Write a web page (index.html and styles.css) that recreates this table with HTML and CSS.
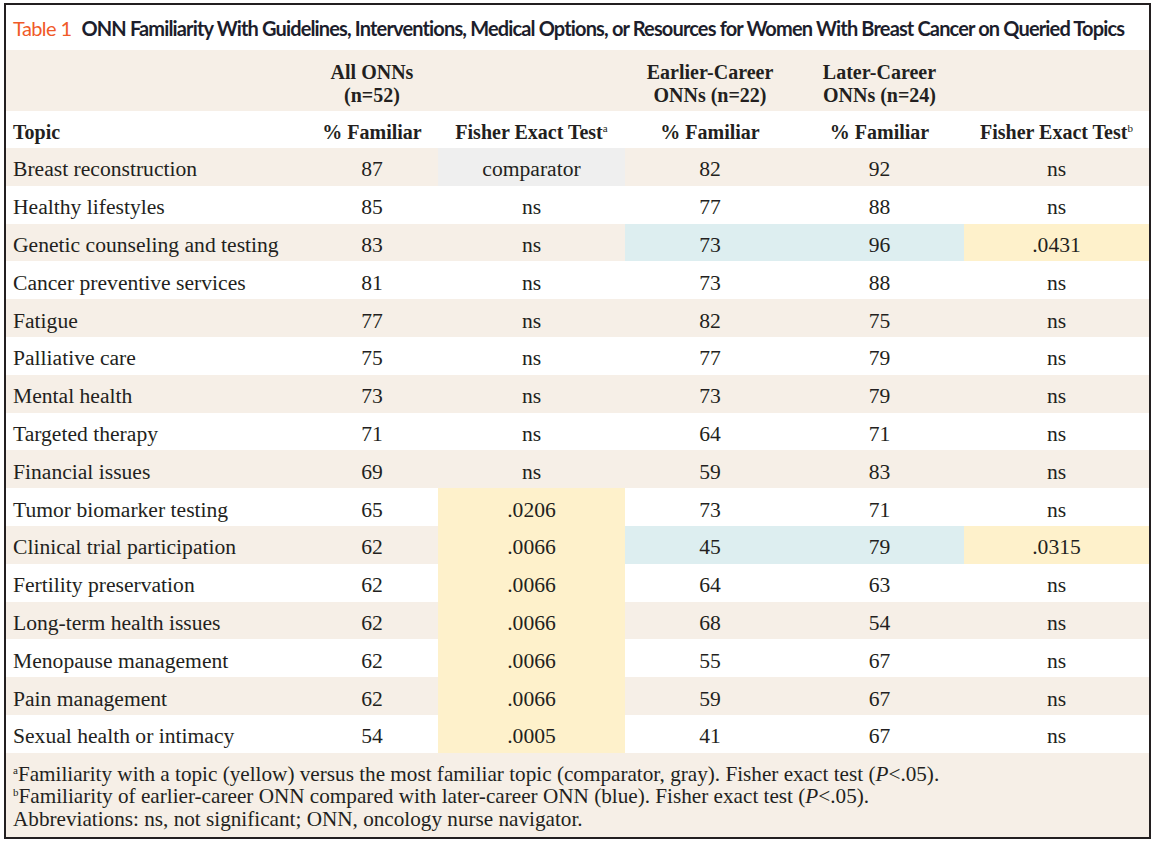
FILE: index.html
```html
<!DOCTYPE html>
<html>
<head>
<meta charset="utf-8">
<link rel="stylesheet" href="styles.css">
</head>
<body>
<div class="frame">
  <div class="title"><span class="label">Table 1</span><span class="caption">ONN Familiarity With Guidelines, Interventions, Medical Options, or Resources for Women With Breast Cancer on Queried Topics</span></div>
  <table class="data">
    <colgroup>
      <col class="c-topic"><col class="c-pct"><col class="c-fa"><col class="c-early"><col class="c-late"><col class="c-fb">
    </colgroup>
    <thead>
      <tr class="h1 beige">
        <th></th>
        <th>All ONNs<br>(n=52)</th>
        <th></th>
        <th>Earlier-Career<br>ONNs (n=22)</th>
        <th>Later-Career<br>ONNs (n=24)</th>
        <th></th>
      </tr>
      <tr class="h2">
        <th class="left">Topic</th>
        <th>% Familiar</th>
        <th>Fisher Exact Test<sup>a</sup></th>
        <th>% Familiar</th>
        <th>% Familiar</th>
        <th>Fisher Exact Test<sup>b</sup></th>
      </tr>
    </thead>
    <tbody>
      <tr class="beige"><td class="left">Breast reconstruction</td><td>87</td><td class="gray">comparator</td><td>82</td><td>92</td><td>ns</td></tr>
      <tr><td class="left">Healthy lifestyles</td><td>85</td><td>ns</td><td>77</td><td>88</td><td>ns</td></tr>
      <tr class="beige"><td class="left">Genetic counseling and testing</td><td>83</td><td>ns</td><td class="blue">73</td><td class="blue">96</td><td class="yellow">.0431</td></tr>
      <tr><td class="left">Cancer preventive services</td><td>81</td><td>ns</td><td>73</td><td>88</td><td>ns</td></tr>
      <tr class="beige"><td class="left">Fatigue</td><td>77</td><td>ns</td><td>82</td><td>75</td><td>ns</td></tr>
      <tr><td class="left">Palliative care</td><td>75</td><td>ns</td><td>77</td><td>79</td><td>ns</td></tr>
      <tr class="beige"><td class="left">Mental health</td><td>73</td><td>ns</td><td>73</td><td>79</td><td>ns</td></tr>
      <tr><td class="left">Targeted therapy</td><td>71</td><td>ns</td><td>64</td><td>71</td><td>ns</td></tr>
      <tr class="beige"><td class="left">Financial issues</td><td>69</td><td>ns</td><td>59</td><td>83</td><td>ns</td></tr>
      <tr><td class="left">Tumor biomarker testing</td><td>65</td><td class="yellow">.0206</td><td>73</td><td>71</td><td>ns</td></tr>
      <tr class="beige"><td class="left">Clinical trial participation</td><td>62</td><td class="yellow">.0066</td><td class="blue">45</td><td class="blue">79</td><td class="yellow">.0315</td></tr>
      <tr><td class="left">Fertility preservation</td><td>62</td><td class="yellow">.0066</td><td>64</td><td>63</td><td>ns</td></tr>
      <tr class="beige"><td class="left">Long-term health issues</td><td>62</td><td class="yellow">.0066</td><td>68</td><td>54</td><td>ns</td></tr>
      <tr><td class="left">Menopause management</td><td>62</td><td class="yellow">.0066</td><td>55</td><td>67</td><td>ns</td></tr>
      <tr class="beige"><td class="left">Pain management</td><td>62</td><td class="yellow">.0066</td><td>59</td><td>67</td><td>ns</td></tr>
      <tr><td class="left">Sexual health or intimacy</td><td>54</td><td class="yellow">.0005</td><td>41</td><td>67</td><td>ns</td></tr>
    </tbody>
  </table>
  <div class="notes">
    <p><sup>a</sup>Familiarity with a topic (yellow) versus the most familiar topic (comparator, gray). Fisher exact test (<i>P</i>&lt;.05).</p>
    <p><sup>b</sup>Familiarity of earlier-career ONN compared with later-career ONN (blue). Fisher exact test (<i>P</i>&lt;.05).</p>
    <p>Abbreviations: ns, not significant; ONN, oncology nurse navigator.</p>
  </div>
</div>
</body>
</html>
```
FILE: styles.css
```css
html, body {
  margin: 0;
  padding: 0;
  background: #ffffff;
}
body {
  padding: 3px 0 0 4px;
}
.frame {
  width: 1143px;
  border: 2px solid #231f20;
  background: #ffffff;
  color: #231f20;
  font-family: "Liberation Serif", "Times New Roman", serif;
}
.title {
  height: 45px;
  display: flex;
  align-items: center;
  padding-left: 7px;
  font-family: Lato, "Open Sans", sans-serif;
  font-size: 20px;
  white-space: nowrap;
}
.title .label {
  color: #f05a28;
  font-weight: 400;
  letter-spacing: -0.6px;
  margin-right: 10px;
}
.title .caption {
  color: #1d1e2c;
  font-weight: 700;
  letter-spacing: -0.85px;
}
table.data {
  width: 1143px;
  border-collapse: collapse;
  table-layout: fixed;
}
col.c-topic { width: 300px; }
col.c-pct { width: 132px; }
col.c-fa { width: 187px; }
col.c-early { width: 170px; }
col.c-late { width: 169px; }
col.c-fb { width: 185px; }
th, td {
  padding: 0;
  text-align: center;
  vertical-align: middle;
}
th {
  font-weight: 700;
  font-size: 20px;
  line-height: 23px;
}
tr.h1 th { height: 54px; padding-top: 7px; }
tr.h2 th { height: 32px; padding-top: 5px; }
td {
  font-size: 21.6px;
  height: 32.8px;
  line-height: 24px;
  padding-top: 5px;
}
.left {
  text-align: left;
  padding-left: 7px;
}
sup {
  font-size: 11px;
  line-height: 0;
  vertical-align: 7px;
  font-weight: 400;
}
.beige { background: #f6efe7; }
.gray { background: #efefef; }
.blue { background: #ddeef0; }
.yellow { background: #fef1cb; }
.notes {
  background: #f6efe7;
  padding: 10px 7px 7px;
  font-size: 21.2px;
  line-height: 22.5px;
}
.notes p { margin: 0; }
.notes sup { vertical-align: 7px; font-size: 11px; }
```
